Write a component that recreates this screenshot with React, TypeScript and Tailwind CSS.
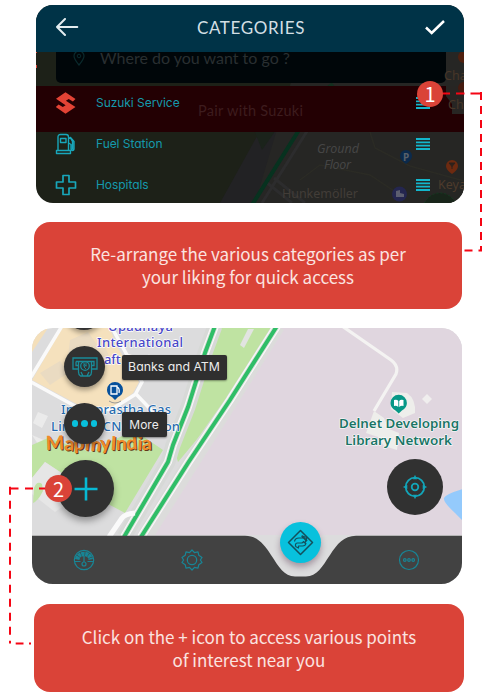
import React from "react";

const GEO = "font-['Lato','Liberation_Sans',sans-serif]";
const LABEL = "font-['Inter','Lato',sans-serif] [font-feature-settings:'cv11']";
const MAPF = "font-['Noto_Sans','Open_Sans',sans-serif]";
const CAP = "font-['Noto_Sans_CJK_SC','Noto_Sans',sans-serif]";

function BackArrow() {
  return (
    <svg width="24" height="20" viewBox="0 0 24 20" fill="none" stroke="#e3edf0" strokeWidth="2" strokeLinecap="round" strokeLinejoin="round">
      <path d="M22.3 9H2M10 1L2 9l8 8" />
    </svg>
  );
}

function CheckMark() {
  return (
    <svg width="22" height="18" viewBox="0 0 22 18" fill="none" stroke="#fff" strokeWidth="2.5">
      <path d="M2 8.500l5.700 5.500L20 2" />
    </svg>
  );
}

function SuzukiIcon() {
  return (
    <svg width="22" height="22" viewBox="0 0 22 22" fill="#e34335">
      <path d="M10.500 0.300L1 6.800L10.600 13.300L7.800 15.100L3.600 12.500L0.800 14.900L10.500 21.700L20.500 15.100L10.900 8.700L13.700 6.900L17.900 9.500L20.500 7.100Z" />
    </svg>
  );
}

function FuelIcon() {
  return (
    <svg width="22" height="22" viewBox="0 0 22 22" fill="none" stroke="#18a7bb" strokeWidth="1.4" strokeLinejoin="round">
      <path d="M3 17.500V4Q3 1.500 5.500 1.500H11Q13.500 1.500 13.500 4V17.500M1.500 17.500H15.500V20.500H1.500Z" />
      <path d="M5.500 5.500h5.500v4H5.500z" />
      <path d="M13.500 5.500L15.500 4.500l3.500 4v7q0 2-1.500 2T16 15.500v-4L13.500 10M15.500 5l2 3.500v8" />
    </svg>
  );
}

function CrossIcon() {
  return (
    <svg width="22" height="22" viewBox="0 0 22 22" fill="none" stroke="#18a7bb" strokeWidth="1.7" strokeLinejoin="round">
      <path d="M8 1.500h6v6.500h6.500v6h-6.500v6.500h-6v-6.500h-6.500v-6h6.500z" />
    </svg>
  );
}

function DragHandle() {
  return (
    <svg width="14" height="12" viewBox="0 0 14 12" stroke="#13b6cc" strokeWidth="1.800">
      <path d="M0 1H14M0 4.330H14M0 7.660H14M0 11H14" />
    </svg>
  );
}

function DimMap() {
  return (
    <svg className="absolute inset-0" width="428" height="198" viewBox="36 5 428 198">
      <rect x="36" y="5" width="428" height="198" fill="#1d2118" />
      <path d="M266 120H320V203H220Z" fill="#222224" />
      <path d="M250 120H283L262 150Z" fill="#1b231b" />
      <path d="M300 52H464V203H255Z" fill="#262624" />
      <path d="M314 120L262 203M266 182L292 203M274 178L305 203" stroke="#2c2c2d" strokeWidth="3" fill="none" />
      <path d="M299 130L252 205" stroke="#07321f" strokeWidth="4" />
      <path d="M333 84l-8 6" stroke="#13301f" strokeWidth="4" />
      <path d="M370 132l5 16 35 18 54 15M300 180l20-15 50 10 30 20" stroke="#2b2b25" strokeWidth="1.5" fill="none" />
      <circle cx="440" cy="210" r="17" fill="#18251a" stroke="#153c22" strokeDasharray="2 2" />
      <rect x="56" y="40" width="390" height="43" rx="5" fill="#000609" />
      <rect x="36" y="86" width="428" height="46" fill="#230003" />
      <path d="M446 86H464V114H452V104L446 96Z" fill="#272523" />
      <circle cx="464" cy="57" r="6" fill="#50200f" />
      <circle cx="464" cy="88" r="6" fill="#451b10" />
      <g className={GEO}>
        <text x="100" y="64" fontSize="16" fill="#292f31" textLength="190">Where do you want to go ?</text>
        <text x="198" y="115.500" fontSize="14.500" fill="#3d1c1e" textLength="105">Pair with Suzuki</text>
      </g>
      <path d="M79 65q-5-6-5-9a5 5 0 0 1 10 0q0 3-5 9z" fill="none" stroke="#0a2a2d" strokeWidth="1.200" />
      <circle cx="79" cy="56" r="1.800" fill="none" stroke="#0a2a2d" />
      <g className={MAPF} fill="#4a4641" fontSize="12.500">
        <text x="317" y="152.500" fontStyle="italic" textLength="42" fill="#454545">Ground</text>
        <text x="324" y="168.500" fontStyle="italic" textLength="27" fill="#454545">Floor</text>
        <text x="282" y="198" textLength="76" fill="#423d38">Hunkemöller</text>
        <text x="438" y="189" fill="#4d3b2c">Keya</text>
        <text x="444" y="80" fill="#483628">Cha</text>
        <text x="448" y="109" fill="#483628">Cha</text>
      </g>
      <path d="M400 156a6 6 0 0 1 12 0q0 4-6 8q-6-4-6-8z" fill="#0b2a4c" />
      <text x="403" y="160.500" fontSize="10" fontWeight="700" className={MAPF} fill="#59616a">P</text>
      <path d="M446 166a6 6 0 0 1 12 0q0 4-6 8q-6-4-6-8z" fill="#6d2a10" />
      <path d="M449 163h6l-3 3.500zM452 166v3" fill="#2f211b" stroke="#2f211b" />
      <circle cx="399.500" cy="194" r="7.500" fill="#24264f" />
      <path d="M396 197v-6l4-1v3l4 1v3z" fill="#5c5e70" />
      <path d="M36 48h1v5h-1zM36 65h1v3h-1z" fill="#da4338" />
    </svg>
  );
}

function CategoryRow({ icon, label }: { icon: React.ReactNode; label: string }) {
  return (
    <div className="flex h-[41px] shrink-0 items-center pl-[19px] pr-[34px]">
      <span className="flex w-[41px] items-center">{icon}</span>
      <span className={`${LABEL} flex-1 text-[12px] leading-4 tracking-[-0.05px] text-[#1599ac]`}>{label}</span>
      <DragHandle />
    </div>
  );
}

function CategoriesPanel() {
  return (
    <section className="relative ml-9 h-[198px] w-[428px] shrink-0 overflow-hidden rounded-[17px]">
      <DimMap />
      <div className="relative flex h-full flex-col">
        <header className="flex h-[47px] shrink-0 items-center justify-between bg-[#003347] pb-[2px] pl-[19px] pr-[18px]">
          <BackArrow />
          <h1 className={`${GEO} -ml-[1px] text-[17px] leading-6 tracking-[0.65px] text-[#d2dfe4]`}>CATEGORIES</h1>
          <CheckMark />
        </header>
        <div className="flex flex-col pt-[30.500px]">
          <CategoryRow icon={<SuzukiIcon />} label="Suzuki Service" />
          <CategoryRow icon={<FuelIcon />} label="Fuel Station" />
          <CategoryRow icon={<CrossIcon />} label="Hospitals" />
        </div>
      </div>
    </section>
  );
}

function CityMap() {
  return (
    <svg className="absolute inset-0" width="430" height="256" viewBox="32 328 430 256">
      <rect x="32" y="328" width="430" height="256" fill="#dcdcdd" />
      <path d="M32 328H48L32 352Z" fill="#f4dfba" />
      <path d="M62 328H110L116 345L139 382L133 393L113 408L86 409L32 380Z" fill="#f5e1bd" />
      <path d="M70 340l18-8 10 14-8 18-22-8zM88 349l16-5 5 12-14 8zM40 373l20-12 8 12-18 12z" fill="#eadbc2" />
      <path d="M62 326L31 377M31 382L84 411L112 409L136 394L176 436M135 395L142 382L112 328" stroke="#fafafa" strokeWidth="3.500" fill="none" />
      <path d="M38 412l10 4-6 12-9-5zM32 435l14 6-6 6z" fill="#ebebeb" />
      <path d="M32 445L48 438L90 452L126 434L141 435L163 450L125 513L110 505L45 462L32 478Z" fill="#bfe3a2" />
      <path d="M45 462l15 10 15 26-20 14-23-18V478Z" fill="#e6e6e6" />
      <path d="M33 503l1-15q3-8 8-4l1 7q-5 10-10 12z" fill="#c1e2a6" />
      <path d="M277 328L142 535H462V328Z" fill="#e0d6df" />
      <path d="M281 328L151 535" stroke="#dcdcdb" strokeWidth="7" />
      <path d="M215 328H277L230 400L178 462L173 445L188 407Z" fill="#bfe3a2" />
      <path d="M240 345l8-16h6l-10 19z" fill="#e2e4e1" />
      <path d="M215 326L205 353L188 407L173 445L168 462L124 537" stroke="#d7d9d7" strokeWidth="15" fill="none" />
      <path d="M277 326L230 400L188 460L141 537" stroke="#d9dad9" strokeWidth="9" fill="none" />
      <path d="M215 326L205 353L188 407L173 445L168 462L124 537M277 326L230 400L188 463L141 537" stroke="#fafafa" strokeWidth="8" fill="none" />
      <path d="M215 326L205 353L188 407L173 445L168 462L124 537M277 326L230 400L188 463L141 537" stroke="#d9ddd8" strokeWidth="5.800" fill="none" />
      <path d="M215 326L205 353L188 407L173 445L168 462L124 537M277 326L230 400L188 463L141 537" stroke="#2fbe67" strokeWidth="4" fill="none" />
      <path d="M109 537L122 518Q125 514 135 513" stroke="#fafafa" strokeWidth="5" fill="none" />
      <path d="M342 326L391 360Q399 366 396 374L374 411" stroke="#f4f3f2" strokeWidth="3.200" fill="none" />
      <path d="M374 411l10 7 5 11 10 4-2 17-13-4-6-9-12-4zM392 392l15 1q9 6 8 20l-12 5-12-9z" fill="#eeeeeb" />
      <path d="M427 394l5 5-5 5-5-5z" fill="#f0eeee" />
      <path d="M463 489Q446 494 444 498Q443 502 455 513L463 521Z" fill="#94cafc" />
      <g className={MAPF} fontSize="13" fontWeight="500" fill="#4847c8" stroke="#fff" strokeWidth="1.500" paintOrder="stroke" strokeLinejoin="round">
        <text x="108" y="330.500" textLength="65">Upadhaya</text>
        <text x="97" y="347" textLength="86">International</text>
        <text x="104" y="364" textLength="60">aft Centre</text>
      </g>
      <path d="M107 390a8 8 0 1 1 16 0q0 5-5 7l-3 3-3-3q-5-2-5-7z" fill="#07519c" />
      <path d="M111 386h6v8h-6zM117 387q3 1 2 6" fill="none" stroke="#fff" strokeWidth="1.300" />
      <path d="M109 401q6 4 12 0" stroke="#999" fill="none" />
      <g className={MAPF} fontSize="13" fontWeight="500" fill="#276bae" stroke="#fff" strokeWidth="1.200" paintOrder="stroke" strokeLinejoin="round">
        <text x="61" y="414" textLength="110">Indraprastha Gas</text>
        <text x="51" y="431" textLength="129">Limited CNG Station</text>
      </g>
      <g className={MAPF} fontSize="13.300" fontWeight="600" fill="#1b7566" stroke="#fff" strokeWidth="1.200" paintOrder="stroke" strokeLinejoin="round">
        <text x="339" y="428" textLength="120" lengthAdjust="spacingAndGlyphs">Delnet Developing</text>
        <text x="345" y="445" textLength="107" lengthAdjust="spacingAndGlyphs">Library Network</text>
      </g>
      <path d="M390.500 403a8.200 8.200 0 1 1 16.400 0q0 5-5 7.500l-3.200 3-3.200-3q-5-2.500-5-7.500z" fill="#079887" />
      <path d="M394 400q3-1 4.300 1v6q-2-2-4.300-1zM403.500 400q-3-1-4.300 1v6q2-2 4.300-1z" fill="#fff" />
      <text
        x="46"
        y="450"
        textLength="106"
        className="font-['Lato',sans-serif] [text-shadow:1px_1px_0_#633816]"
        fontSize="19.500"
        fontWeight="700"
        fill="#f08b2c"
        rotate="-2 5 -4 6 -3 4 0 -4 3 -2"
      >
        MapmyIndia
      </text>
    </svg>
  );
}

function AtmIcon() {
  return (
    <svg width="26" height="22" viewBox="0 0 26 22" fill="none" stroke="#198b99" strokeWidth="1.300">
      <path d="M6 13H1V2h24v11h-5M4 5.500h18v4h-2M4 5.500v4h2" />
      <path d="M6.500 5.500V16q0 3 2 4h9q2-1 2-4V5.500M9 16l2 4M17 16l-2 4" />
      <circle cx="13" cy="10" r="4.300" />
      <path d="M11 8h4M11 9.800h4M12 8q3 1 0 3l2 2" strokeWidth=".9" />
    </svg>
  );
}

function LocateIcon() {
  return (
    <svg width="26" height="26" viewBox="0 0 26 26" fill="none" stroke="#12a5b9" strokeWidth="1.800">
      <circle cx="13" cy="13" r="9.300" />
      <circle cx="13" cy="13" r="3.300" />
      <path d="M13 .8l2 4.500h-4zM13 25.200l2-4.500h-4zM.8 13l4.500-2v4zM25.200 13l-4.500-2v4z" fill="#12a5b9" stroke="none" />
    </svg>
  );
}

function DirectionsIcon() {
  return (
    <svg width="27" height="27" viewBox="0 0 27 27" fill="none" stroke="#14505c" strokeWidth="1.500" strokeLinejoin="round">
      <path d="M13.500 1.500L25.500 13.500L13.500 25.500L1.500 13.500Z" />
      <path d="M8.500 17.500V16q0-2 2-2h4q1.500 0 2-1.500l1.500 1.500 2-5.500-5-1.500 1 2H12q-4 0-4.500 3.500M8.500 17.500l3 1.500v-2h4q3 0 3.500-3" strokeWidth="1.200" />
      <path d="M15 7l5 5" strokeWidth="1.800" />
    </svg>
  );
}

function GaugeIcon() {
  return (
    <svg width="22" height="22" viewBox="0 0 22 22" fill="none" stroke="#188595" strokeWidth="1.200">
      <circle cx="11" cy="11" r="9.700" />
      <path d="M4.200 10.500q1-5.500 6.800-5.500t6.800 5.500" strokeWidth="4.500" strokeDasharray="3 .5" />
      <path d="M2 12.500h5.500M14.500 12.500H20M11 7v6" />
      <circle cx="11" cy="15" r="2" />
    </svg>
  );
}

function GearIcon() {
  return (
    <svg width="22" height="22" viewBox="0 0 22 22" fill="none" stroke="#188595" strokeWidth="1.250" strokeLinejoin="round">
      <path d="M11 1l2.500 2.600 3.500-.8.800 3.500L21 8.500 19.400 11l1.600 2.500-3.200 2.200-.8 3.500-3.500-.8L11 21l-2.500-2.600-3.500.8-.8-3.500L1 13.500 2.600 11 1 8.500l3.200-2.200.8-3.500 3.500.8z" />
      <circle cx="11" cy="11" r="4.700" />
    </svg>
  );
}

function DotsIcon() {
  return (
    <svg width="22" height="22" viewBox="0 0 22 22" fill="none" stroke="#188595" strokeWidth="1.200">
      <circle cx="11" cy="11" r="9.500" />
      <circle cx="6.800" cy="11" r="1.300" />
      <circle cx="11" cy="11" r="1.300" />
      <circle cx="15.200" cy="11" r="1.300" />
    </svg>
  );
}

function MapPanel() {
  const tip = "rounded-[2px] bg-[#2f2f2f] text-[#ececec] flex items-center justify-center whitespace-nowrap shadow-[0_1px_2px_rgba(0,0,0,.4)]";
  return (
    <section className="relative ml-8 mt-[19px] flex h-[256px] w-[430px] shrink-0 flex-col justify-end overflow-hidden rounded-[21px]">
      <CityMap />
      <div className="absolute left-[32px] top-[-38px] size-[40px] rounded-full bg-[#323232] shadow-[0_3px_5px_rgba(0,0,0,.35)]" />
      <div className="absolute left-[32px] top-[18px] flex items-center gap-[17.500px]">
        <div className="flex size-[41px] items-center justify-center rounded-full bg-[#313131] shadow-[0_3px_5px_rgba(0,0,0,.35)]">
          <AtmIcon />
        </div>
        <div className={`${tip} ${LABEL} -ml-[1px] mt-[2px] h-[25px] w-[105px] text-[12.300px]`}>Banks and ATM</div>
      </div>
      <div className="absolute left-[32px] top-[75px] flex items-center gap-[17.500px]">
        <div className="flex size-[41px] items-center justify-center gap-[3px] rounded-full bg-[#313131] shadow-[0_3px_5px_rgba(0,0,0,.35)]">
          <span className="size-[6.500px] rounded-full bg-[#08c0dc]" />
          <span className="size-[6.500px] rounded-full bg-[#08c0dc]" />
          <span className="size-[6.500px] rounded-full bg-[#08c0dc]" />
        </div>
        <div className={`${tip} ${LABEL} -ml-[1px] mt-[2px] h-[25px] w-[45px] text-[12px]`}>More</div>
      </div>
      <div className="absolute left-[25px] top-[132px] flex size-[57px] items-center justify-center rounded-full bg-[#313131] shadow-[0_4px_7px_rgba(0,0,0,.35)]">
        <svg width="24" height="24" viewBox="0 0 24 24" stroke="#08b9d3" strokeWidth="2.600">
          <path d="M12 .5v23M.5 12h23" />
        </svg>
      </div>
      <div className="absolute left-[354.500px] top-[131px] flex size-[56px] items-center justify-center rounded-full bg-[#313131]">
        <LocateIcon />
      </div>
      <nav className="relative h-[49px] w-full">
        <svg className="absolute inset-0" width="430" height="49" viewBox="0 0 430 49">
          <path d="M0 .7H213C225 .7 232 9 239 20C247 32 252 41.500 263 41.500H274C285 41.500 290 32 298 20C305 9 312 .7 324 .7H430V49H0Z" fill="#424242" />
        </svg>
        <div className="relative flex h-full items-center justify-between pl-[41px] pr-[42px]">
          <div className="flex gap-[86px]">
            <GaugeIcon />
            <GearIcon />
          </div>
          <DotsIcon />
        </div>
        <div className="absolute left-[248px] top-[-13.500px] flex size-[41px] items-center justify-center rounded-full bg-[#08c1dd] shadow-[0_4px_6px_rgba(60,20,50,.35)]">
          <DirectionsIcon />
        </div>
      </nav>
    </section>
  );
}

function Connectors() {
  return (
    <svg className="pointer-events-none absolute inset-0" width="489" height="700" viewBox="0 0 489 700" stroke="#f50514" strokeWidth="2" fill="none">
      <path d="M441 93.500H450M456 93.500H464.500M470.500 93.500H482" />
      <path d="M481 92V250.700" strokeDasharray="8 6" />
      <path d="M464.500 250.500H472.500M478.500 250.500H482" />
      <path d="M9 488.500H18.500M25 488.500H33M39 488.500H46" />
      <path d="M10 486.700V643.500" strokeDasharray="8 6" />
      <path d="M15.700 643.500H23.500M29 643.500H31" />
    </svg>
  );
}

export default function App() {
  return (
    <main className="relative flex h-[700px] w-[489px] flex-col overflow-hidden bg-white pt-[5px]">
      <CategoriesPanel />
      <div className={`${CAP} ml-[34px] mt-[19px] flex h-[87px] w-[428px] shrink-0 flex-col items-center justify-center rounded-[16px] bg-[#da4338] text-[17px] leading-[22.500px] text-[#fbe3e0]`}>
        <p className="whitespace-nowrap">Re-arrange the various categories as per</p>
        <p className="whitespace-nowrap">your liking for quick access</p>
      </div>
      <MapPanel />
      <div className={`${CAP} ml-[34px] mt-[20px] flex h-[88px] w-[430px] shrink-0 flex-col items-center justify-center rounded-[16px] bg-[#da4338] text-[17px] leading-[23px] text-[#fbe3e0]`}>
        <p className="whitespace-nowrap">Click on the + icon to access various points</p>
        <p className="whitespace-nowrap">of interest near you</p>
      </div>
      <Connectors />
      <div className={`${CAP} absolute left-[417px] top-[80.500px] flex size-[26px] items-center justify-center rounded-full bg-[#da4338] text-[20px] leading-none text-white`}>1</div>
      <div className={`${CAP} absolute left-[45px] top-[475px] flex size-[27px] items-center justify-center rounded-full bg-[#da4338] text-[20px] leading-none text-white`}>2</div>
    </main>
  );
}
